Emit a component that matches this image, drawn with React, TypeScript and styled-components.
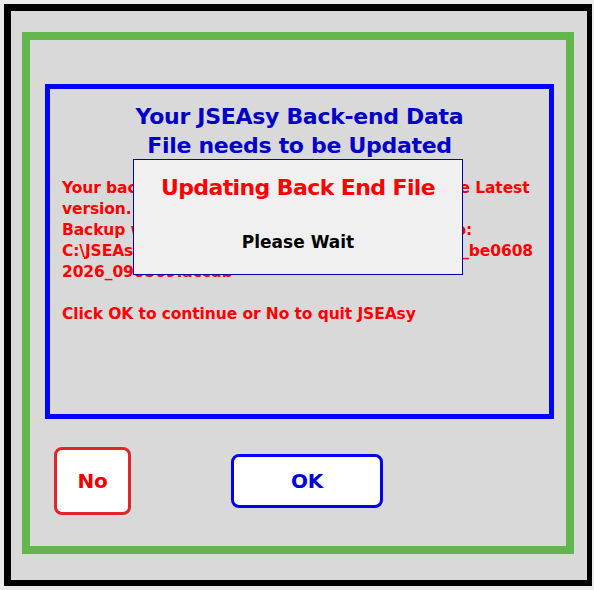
import React from "react";
import styled, { createGlobalStyle } from "styled-components";

const GlobalStyle = createGlobalStyle`
  html, body {
    margin: 0;
    padding: 0;
    background: #ebebeb;
  }
  body {
    font-family: "DejaVu Sans", Verdana, sans-serif;
  }
`;

const Frame = styled.div`
  width: 588px;
  height: 582px;
  margin: 4px 0 0 4px;
  border-style: solid;
  border-color: #000000;
  border-width: 7px 5px 6px 7px;
  background: #d9d9d9;
  padding: 21px 13px 0 11px;
  box-sizing: border-box;
`;

const GreenPanel = styled.div`
  width: 552px;
  height: 522px;
  box-sizing: border-box;
  border: 8px solid #62b64c;
  padding: 44px 12px 0 15px;
`;

const MessageBox = styled.div`
  position: relative;
  height: 335px;
  box-sizing: border-box;
  border: 5px solid #0000ff;
  padding: 13px 12px 0 12px;
`;

const Heading = styled.h1`
  margin: 0 0 18px 0;
  font-size: 22px;
  line-height: 29px;
  font-weight: bold;
  color: #0000c8;
  text-align: center;
  letter-spacing: -0.3px;
`;

const Body = styled.div`
  font-size: 15.5px;
  line-height: 21px;
  font-weight: bold;
  color: #ff0000;
  letter-spacing: -0.1px;
  white-space: nowrap;
`;

const Line = styled.div``;

const Spacer = styled.div`
  height: 21px;
`;

const WaitDialog = styled.div`
  position: absolute;
  left: 83px;
  top: 70px;
  width: 330px;
  height: 116px;
  box-sizing: border-box;
  border: 1px solid #0000a8;
  background: #f0f0f0;
  display: flex;
  flex-direction: column;
  align-items: center;
`;

const WaitTitle = styled.div`
  margin-top: 14px;
  font-size: 22px;
  line-height: 28px;
  font-weight: bold;
  color: #ff0000;
  letter-spacing: -0.6px;
`;

const WaitText = styled.div`
  margin-top: 29px;
  font-size: 17px;
  line-height: 22px;
  font-weight: bold;
  color: #000000;
`;

const ButtonRow = styled.div`
  display: flex;
  align-items: center;
  padding: 28px 0 0 9px;
  gap: 100px;
`;

const ActionButton = styled.button<{ $tone: "red" | "blue"; $w: number; $h: number }>`
  width: ${({ $w }) => $w}px;
  height: ${({ $h }) => $h}px;
  box-sizing: border-box;
  border: 3px solid ${({ $tone }) => ($tone === "red" ? "#e0262b" : "#0000ee")};
  border-radius: 8px;
  background: #ffffff;
  color: ${({ $tone }) => ($tone === "red" ? "#ee0000" : "#0000dd")};
  font-family: "DejaVu Sans", Verdana, sans-serif;
  font-size: 20px;
  font-weight: bold;
  letter-spacing: -0.3px;
  padding: 0;
  cursor: pointer;
`;

export default function App() {
  return (
    <>
      <GlobalStyle />
      <Frame>
        <GreenPanel>
          <MessageBox>
            <Heading>
              Your JSEAsy Back-end Data
              <br />
              File needs to be Updated
            </Heading>
            <Body>
              <Line>Your back-end data file will be upgraded to the Latest</Line>
              <Line>version.</Line>
              <Line>Backup will be made of the current data file to:</Line>
              <Line>C:\JSEAsy\Data\Backups\JSEAsy_BackEnd_Data_be0608</Line>
              <Line>2026_090509.accdb</Line>
              <Spacer />
              <Line>Click OK to continue or No to quit JSEAsy</Line>
            </Body>
            <WaitDialog>
              <WaitTitle>Updating Back End File</WaitTitle>
              <WaitText>Please Wait</WaitText>
            </WaitDialog>
          </MessageBox>
          <ButtonRow>
            <ActionButton $tone="red" $w={77} $h={68}>
              No
            </ActionButton>
            <ActionButton $tone="blue" $w={152} $h={54}>
              OK
            </ActionButton>
          </ButtonRow>
        </GreenPanel>
      </Frame>
    </>
  );
}
